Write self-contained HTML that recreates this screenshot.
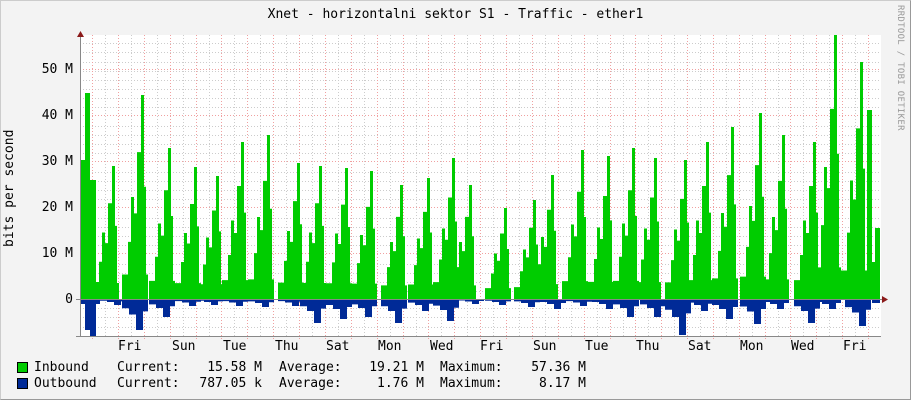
<!DOCTYPE html>
<html><head><meta charset="utf-8"><style>
html,body{margin:0;padding:0}
body{width:911px;height:400px;background:#f3f3f3;position:relative;overflow:hidden;font-family:"DejaVu Sans Mono","Liberation Mono",monospace;color:#000}
.frame{position:absolute;left:0;top:0;width:909px;height:398px;border:1px solid #ccc;border-right-color:#999;border-bottom-color:#999}
.t{position:absolute;font-size:13px;line-height:14px;white-space:pre}
.r{text-align:right}
</style></head><body>
<div class="frame"></div>
<svg width="911" height="400" style="position:absolute;left:0;top:0">
<defs>
<path id="g" d="M0,0 V-0.12 H6 V-0.28 H9 V-0.5 H12 V-0.42 H15 V-0.72 H19 V-1 H22 V-0.55 H24 V-0.12 H26 V0 Z"/>
<path id="b" d="M0,0 V0.3 H7 V0.5 H14 V1 H21 V0.4 H26 V0 Z"/>
</defs>
<rect x="80" y="35" width="801" height="301" fill="#fff"/>
<g stroke="#ccc" stroke-dasharray="1,2" stroke-width="1">
<path d="M80,43.5H881 M80,52.5H881 M80,62.5H881 M80,71.5H881 M80,80.5H881 M80,89.5H881 M80,98.5H881 M80,107.5H881 M80,126.5H881 M80,135.5H881 M80,144.5H881 M80,153.5H881 M80,172.5H881 M80,181.5H881 M80,190.5H881 M80,199.5H881 M80,218.5H881 M80,227.5H881 M80,236.5H881 M80,245.5H881 M80,264.5H881 M80,273.5H881 M80,282.5H881 M80,291.5H881 M80,308.5H881 M80,317.5H881 M80,327.5H881"/>
<path d="M105.5,35V336 M131.5,35V336 M157.5,35V336 M183.5,35V336 M209.5,35V336 M234.5,35V336 M260.5,35V336 M286.5,35V336 M312.5,35V336 M338.5,35V336 M364.5,35V336 M390.5,35V336 M416.5,35V336 M441.5,35V336 M467.5,35V336 M493.5,35V336 M519.5,35V336 M545.5,35V336 M571.5,35V336 M597.5,35V336 M623.5,35V336 M648.5,35V336 M674.5,35V336 M700.5,35V336 M726.5,35V336 M752.5,35V336 M778.5,35V336 M803.5,35V336 M829.5,35V336 M855.5,35V336"/>
</g>
<g stroke="#f0a0a0" stroke-dasharray="1,2" stroke-width="1">
<path d="M80,69.5H881 M80,115.5H881 M80,161.5H881 M80,207.5H881 M80,253.5H881"/>
<path d="M92.5,35V340 M118.5,35V340 M144.5,35V340 M170.5,35V340 M196.5,35V340 M221.5,35V340 M247.5,35V340 M273.5,35V340 M299.5,35V340 M325.5,35V340 M351.5,35V340 M377.5,35V340 M403.5,35V340 M428.5,35V340 M454.5,35V340 M480.5,35V340 M506.5,35V340 M532.5,35V340 M558.5,35V340 M584.5,35V340 M610.5,35V340 M635.5,35V340 M661.5,35V340 M687.5,35V340 M713.5,35V340 M739.5,35V340 M765.5,35V340 M790.5,35V340 M816.5,35V340 M842.5,35V340 M868.5,35V340"/>
</g>
<svg x="80" y="0" width="800" height="400" overflow="hidden">
<g fill="#00cc00" transform="translate(-80,0)">
<rect x="80" y="160" width="5" height="139"/>
<rect x="85" y="93" width="5" height="206"/>
<rect x="90" y="180" width="6" height="119"/>
<rect x="96" y="282" width="4" height="17"/>
<use href="#g" transform="translate(93,299) scale(1,133)"/>
<use href="#g" transform="translate(122,299) scale(1,204)"/>
<use href="#g" transform="translate(149,299) scale(1,151)"/>
<use href="#g" transform="translate(175,299) scale(1,132)"/>
<use href="#g" transform="translate(197,299) scale(1,123)"/>
<use href="#g" transform="translate(222,299) scale(1,157)"/>
<use href="#g" transform="translate(248,299) scale(1,164)"/>
<use href="#g" transform="translate(278,299) scale(1,136)"/>
<use href="#g" transform="translate(300,299) scale(1,133)"/>
<use href="#g" transform="translate(326,299) scale(1,131)"/>
<use href="#g" transform="translate(351,299) scale(1,128)"/>
<use href="#g" transform="translate(381,299) scale(1,114)"/>
<use href="#g" transform="translate(408,299) scale(1,121)"/>
<use href="#g" transform="translate(433,299) scale(1,141)"/>
<use href="#g" transform="translate(450,299) scale(1,114)"/>
<use href="#g" transform="translate(485,299) scale(1,91)"/>
<use href="#g" transform="translate(514,299) scale(1,99)"/>
<use href="#g" transform="translate(532,299) scale(1,124)"/>
<use href="#g" transform="translate(562,299) scale(1,149)"/>
<use href="#g" transform="translate(588,299) scale(1,143)"/>
<use href="#g" transform="translate(613,299) scale(1,151)"/>
<use href="#g" transform="translate(635,299) scale(1,141)"/>
<use href="#g" transform="translate(665,299) scale(1,139)"/>
<use href="#g" transform="translate(687,299) scale(1,157)"/>
<use href="#g" transform="translate(712,299) scale(1,172)"/>
<use href="#g" transform="translate(740,299) scale(1,186)"/>
<use href="#g" transform="translate(763,299) scale(1,164)"/>
<use href="#g" transform="translate(794,299) scale(1,157)"/>
<use href="#g" transform="translate(815,299) scale(1,264)"/>
<use href="#g" transform="translate(841,299) scale(1,237)"/>
<rect x="867" y="110" width="5" height="189"/>
<rect x="872" y="262" width="3" height="37"/>
<rect x="875" y="228" width="5" height="71"/>
</g>
<g fill="#002a97" transform="translate(-80,0)">
<rect x="80" y="299" width="5" height="5"/>
<rect x="85" y="299" width="5" height="31"/>
<rect x="90" y="299" width="6" height="37"/>
<rect x="96" y="299" width="4" height="5"/>
<use href="#b" transform="translate(100,299) scale(1,6)"/>
<use href="#b" transform="translate(122,299) scale(1,31)"/>
<use href="#b" transform="translate(149,299) scale(1,18)"/>
<use href="#b" transform="translate(175,299) scale(1,7)"/>
<use href="#b" transform="translate(197,299) scale(1,6)"/>
<use href="#b" transform="translate(222,299) scale(1,7)"/>
<use href="#b" transform="translate(248,299) scale(1,8)"/>
<use href="#b" transform="translate(278,299) scale(1,7)"/>
<use href="#b" transform="translate(300,299) scale(1,24)"/>
<use href="#b" transform="translate(326,299) scale(1,20)"/>
<use href="#b" transform="translate(351,299) scale(1,18)"/>
<use href="#b" transform="translate(381,299) scale(1,24)"/>
<use href="#b" transform="translate(408,299) scale(1,12)"/>
<use href="#b" transform="translate(433,299) scale(1,22)"/>
<use href="#b" transform="translate(458,299) scale(1,5)"/>
<use href="#b" transform="translate(485,299) scale(1,6)"/>
<use href="#b" transform="translate(514,299) scale(1,8)"/>
<use href="#b" transform="translate(540,299) scale(1,10)"/>
<use href="#b" transform="translate(566,299) scale(1,7)"/>
<use href="#b" transform="translate(592,299) scale(1,10)"/>
<use href="#b" transform="translate(613,299) scale(1,18)"/>
<use href="#b" transform="translate(640,299) scale(1,18)"/>
<use href="#b" transform="translate(665,299) scale(1,36)"/>
<use href="#b" transform="translate(687,299) scale(1,12)"/>
<use href="#b" transform="translate(712,299) scale(1,20)"/>
<use href="#b" transform="translate(740,299) scale(1,25)"/>
<use href="#b" transform="translate(763,299) scale(1,10)"/>
<use href="#b" transform="translate(794,299) scale(1,24)"/>
<use href="#b" transform="translate(815,299) scale(1,10)"/>
<use href="#b" transform="translate(845,299) scale(1,27)"/>
<rect x="872" y="299" width="8" height="4"/>
</g>
</svg>
<path d="M80.5,34V336 M76,299.5H884 M76,336.5H881" stroke="#888" stroke-width="1" fill="none"/>
<path d="M80.5,31 L77,37 H84 Z" fill="#8b1a1a"/>
<path d="M888,299.5 L882,296 V303 Z" fill="#8b1a1a"/>
</svg>
<div class="t" style="left:0;width:911px;top:8px;text-align:center;font-size:13px">Xnet - horizontalni sektor S1 - Traffic - ether1</div>
<div class="t" style="left:2px;top:180px;transform:rotate(-90deg);transform-origin:0 0;left:3px;top:247px;font-size:13px">bits per second</div>
<div class="t" style="left:907px;top:5px;transform:rotate(90deg);transform-origin:0 0;font-size:9px;color:#999;letter-spacing:0.3px">RRDTOOL / TOBI OETIKER</div>
<div class="t r" style="left:20px;width:53px;top:63px">50 M</div>
<div class="t r" style="left:20px;width:53px;top:109px">40 M</div>
<div class="t r" style="left:20px;width:53px;top:155px">30 M</div>
<div class="t r" style="left:20px;width:53px;top:201px">20 M</div>
<div class="t r" style="left:20px;width:53px;top:247px">10 M</div>
<div class="t r" style="left:20px;width:53px;top:293px">0</div>
<div class="t" style="top:340px;left:118px">Fri</div>
<div class="t" style="top:340px;left:172px">Sun</div>
<div class="t" style="top:340px;left:223px">Tue</div>
<div class="t" style="top:340px;left:275px">Thu</div>
<div class="t" style="top:340px;left:326px">Sat</div>
<div class="t" style="top:340px;left:378px">Mon</div>
<div class="t" style="top:340px;left:430px">Wed</div>
<div class="t" style="top:340px;left:480px">Fri</div>
<div class="t" style="top:340px;left:533px">Sun</div>
<div class="t" style="top:340px;left:585px">Tue</div>
<div class="t" style="top:340px;left:636px">Thu</div>
<div class="t" style="top:340px;left:688px">Sat</div>
<div class="t" style="top:340px;left:740px">Mon</div>
<div class="t" style="top:340px;left:791px">Wed</div>
<div class="t" style="top:340px;left:843px">Fri</div>
<div style="position:absolute;left:17px;top:362px;width:9px;height:9px;background:#00cc00;border:1px solid #000"></div>
<div style="position:absolute;left:17px;top:378px;width:9px;height:9px;background:#002a97;border:1px solid #000"></div>
<div class="t" style="left:34px;top:361px">Inbound</div>
<div class="t" style="left:34px;top:377px">Outbound</div>
<div class="t" style="left:117px;top:361px">Current:</div>
<div class="t" style="left:117px;top:377px">Current:</div>
<div class="t r" style="left:180px;width:82px;top:361px">15.58 M</div>
<div class="t r" style="left:180px;width:82px;top:377px">787.05 k</div>
<div class="t" style="left:279px;top:361px">Average:</div>
<div class="t" style="left:279px;top:377px">Average:</div>
<div class="t r" style="left:340px;width:84px;top:361px">19.21 M</div>
<div class="t r" style="left:340px;width:84px;top:377px">1.76 M</div>
<div class="t" style="left:440px;top:361px">Maximum:</div>
<div class="t" style="left:440px;top:377px">Maximum:</div>
<div class="t r" style="left:500px;width:86px;top:361px">57.36 M</div>
<div class="t r" style="left:500px;width:86px;top:377px">8.17 M</div>
</body></html>
